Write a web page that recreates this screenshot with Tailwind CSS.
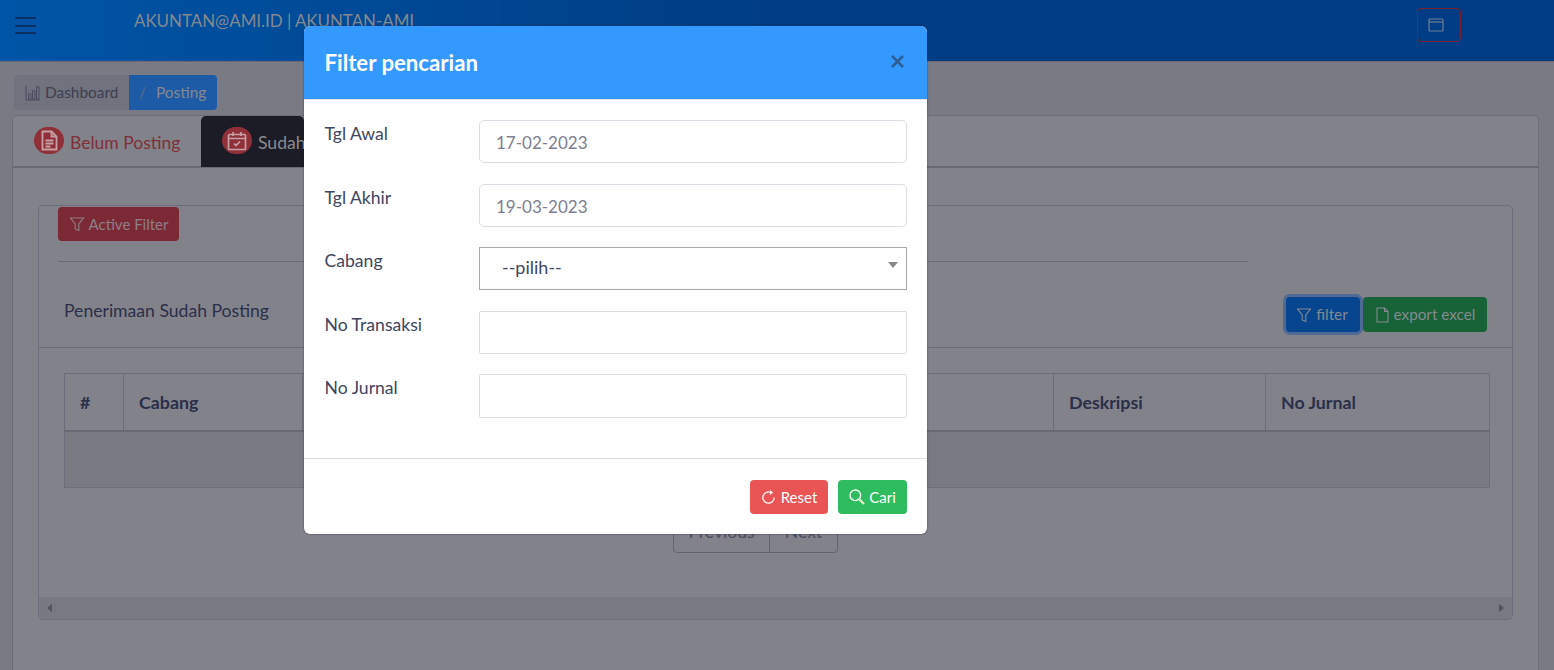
<!DOCTYPE html>
<html lang="en">
<head>
    <meta charset="UTF-8">
    <meta name="viewport" content="width=device-width, initial-scale=1.0">
    <title>Posting</title>
    <script src="https://cdn.jsdelivr.net/npm/@tailwindcss/browser@4"></script>
</head>
<body class="relative h-[670px] w-[1554px] overflow-hidden bg-[#7a7a84] font-['Lato',sans-serif] text-[17.6px] text-[#2a2f4a]">
    <!-- Navbar -->
    <nav class="flex h-[62px] items-start border-b border-[#6a6a76] bg-gradient-to-r from-[#0055a6] via-[#003d84] to-[#003d84]">
        <button class="ml-[15px] mt-[17px] flex h-[17px] w-[21px] flex-col justify-between">
            <span class="h-[2px] w-full bg-[#0b2f63]"></span>
            <span class="h-[2px] w-full bg-[#0b2f63]"></span>
            <span class="h-[2px] w-full bg-[#0b2f63]"></span>
        </button>
        <span class="ml-[98px] mt-[9px] text-[16.9px] leading-[24px] text-[#85888f]">AKUNTAN@AMI.ID | AKUNTAN-AMI</span>
        <button class="ml-auto mr-[93px] mt-[8px] flex h-[34px] w-[44px] items-center justify-center rounded-[4px] border border-[#7a2030] text-[#6d7f98]">
            <svg class="-ml-[6px]" width="16" height="16" viewBox="0 0 16 16" fill="none" stroke="currentColor" stroke-width="1.2"><rect x="1" y="2" width="14" height="12" rx="1"/><path d="M1 5h14"/></svg>
        </button>
    </nav>

    <!-- Breadcrumb -->
    <div class="ml-[14px] mt-[13px] flex h-[35px] w-[203px] overflow-hidden rounded-[4px] text-[15.4px]">
        <div class="flex w-[115px] items-center gap-[4px] bg-[#70727d] pl-[11px] text-[#3d4052]">
            <svg width="16" height="16" viewBox="0 0 16 16" fill="none" stroke="#4a4d60" stroke-width="1"><path d="M1 1v14h14"/><rect x="3.5" y="9" width="2.5" height="5"/><rect x="7.5" y="6" width="2.5" height="8"/><rect x="11.5" y="2" width="2.5" height="12"/></svg>
            <span>Dashboard</span>
        </div>
        <div class="flex flex-1 items-center bg-[#1d5ba6] pl-[10px] text-[#85888f]">
            <span class="mr-[10px] text-[#5b6c86]">/</span><span>Posting</span>
        </div>
    </div>

    <!-- Tabs card -->
    <div class="absolute left-[12px] top-[115px] h-[555px] w-[1527px] rounded-t-[5px] border border-b-0 border-[#6e6e7a] bg-[#82828a]">
        <div class="flex h-[52px] border-b-2 border-[#696974]">
            <div class="flex w-[188px] items-center pl-[21px] text-[#7f3039]">
                <span class="-mt-[2px] flex h-[27px] w-[30px] items-center justify-center rounded-full bg-[#8f3039]">
                    <svg width="17" height="21" viewBox="0 0 17 21" fill="none" stroke="#c7a0a6" stroke-width="1.8"><path d="M1.5 1.5h9l5 5v13h-14z"/><path d="M10.5 1.5v5h5M4.5 10.5h8M4.5 13.5h8M4.5 16.5h5"/></svg>
                </span>
                <span class="ml-[6px] mt-[4px] whitespace-nowrap text-[17.5px]">Belum Posting</span>
            </div>
            <div class="flex h-[51px] w-[103px] items-center overflow-hidden rounded-t-[5px] bg-[#1c1c26] pl-[21px] text-[#8a8a90]">
                <span class="-mt-[2px] flex h-[27px] w-[30px] shrink-0 items-center justify-center rounded-full bg-[#8f3039]">
                    <svg width="20" height="20" viewBox="0 0 20 20" fill="none" stroke="#c7a0a6" stroke-width="1.7"><rect x="1.5" y="3.5" width="17" height="15" rx="1"/><path d="M1.5 7.5h17M6 1v4M14 1v4M7 12.5l2 2 4-4"/></svg>
                </span>
                <span class="ml-[6px] mt-[4px] whitespace-nowrap">Sudah</span>
            </div>
        </div>

        <!-- Inner card -->
        <div class="relative ml-[25px] mt-[37px] h-[415px] w-[1475px] rounded-[5px] border border-[#6e6e7a]">
            <div class="ml-[19px] mt-px flex h-[34px] w-[121px] items-center justify-center gap-[4px] rounded-[4px] bg-[#7b2a35] text-[15px] text-[#8f7f88]">
                <svg width="16" height="16" viewBox="0 0 16 16" fill="none" stroke="currentColor" stroke-width="1.1"><path d="M1.5 2h13L9.8 8v6.5l-3.6-1.6V8z"/></svg>
                <span>Active Filter</span>
            </div>
            <div class="ml-[19px] mt-[20px] h-px w-[1190px] bg-[#6a6a76]"></div>

            <div class="flex h-[86px] items-start justify-between border-b border-[#6e6e7a] pr-[25px]">
                <span class="ml-[25px] mt-[36px] text-[#2a2f4a]">Penerimaan Sudah Posting</span>
                <div class="mt-[35px] flex gap-[3px] text-[15.3px] text-[#848a90]">
                    <div class="flex h-[35px] w-[74px] items-center justify-center gap-[4px] rounded-[4px] bg-[#07458f] ring-[3px] ring-[#4f6a94]">
                        <svg class="-ml-[2px]" width="16" height="16" viewBox="0 0 16 16" fill="none" stroke="currentColor" stroke-width="1.1"><path d="M1.5 2h13L9.8 8v6.5l-3.6-1.6V8z"/></svg>
                        <span>filter</span>
                    </div>
                    <div class="flex h-[35px] w-[124px] items-center justify-center gap-[4px] rounded-[4px] bg-[#186238]">
                        <svg width="15" height="16" viewBox="0 0 15 16" fill="none" stroke="currentColor" stroke-width="1.1"><path d="M2 1h7.5L13 4.5V15H2z"/><path d="M9.5 1v3.5H13"/></svg>
                        <span>export excel</span>
                    </div>
                </div>
            </div>

            <!-- Table -->
            <table class="ml-[25px] mt-[25px] w-[1426px] table-fixed border-collapse border border-[#6e6e7a] text-[17.8px] font-bold">
                <thead>
                    <tr class="h-[57px] border-b-2 border-[#696974] text-left">
                        <th class="w-[59px] border-r border-[#6e6e7a] pl-[15px] pt-[2px]">#</th>
                        <th class="w-[179px] border-r border-[#6e6e7a] pl-[15px] pt-[2px]">Cabang</th>
                        <th class="w-[751px] border-r border-[#6e6e7a] pl-[15px]"></th>
                        <th class="w-[212px] border-r border-[#6e6e7a] pl-[15px] pt-[2px]">Deskripsi</th>
                        <th class="pl-[15px] pt-[2px]">No Jurnal</th>
                    </tr>
                </thead>
                <tbody>
                    <tr class="h-[57px] bg-[#797982]"><td colspan="5"></td></tr>
                </tbody>
            </table>

            <!-- Pagination -->
            <div class="ml-[634px] mt-[27px] flex h-[38px] w-[165px] rounded-[4px] border border-[#63636f] text-[#4c4f60]">
                <span class="flex w-[96px] items-center justify-center border-r border-[#63636f] pb-[4px]">Previous</span>
                <span class="flex flex-1 items-center justify-center pb-[4px]">Next</span>
            </div>

            <!-- Scrollbar -->
            <div class="absolute bottom-0 left-0 flex h-[22px] w-full items-center justify-between rounded-b-[5px] bg-[#797982] px-[8px]">
                <span class="h-0 w-0 border-y-[4px] border-r-[5px] border-y-transparent border-r-[#53535e]"></span>
                <span class="h-0 w-0 border-y-[4px] border-l-[5px] border-y-transparent border-l-[#53535e]"></span>
            </div>
        </div>
    </div>

    <!-- Modal -->
    <div class="absolute left-[304px] top-[26px] flex h-[508px] w-[623px] flex-col overflow-hidden rounded-[6px] bg-white shadow-[0_0_2px_rgba(20,20,40,0.6)]">
        <div class="flex h-[74px] shrink-0 items-center justify-between border-b border-[#e2e4ec] bg-[#3399ff] pl-[20.5px] pr-[23px]">
            <h2 class="mt-px text-[22.2px] font-bold text-white">Filter pencarian</h2>
            <svg class="-mt-[2px]" width="13" height="13" viewBox="0 0 13 13" stroke="#2d5f96" stroke-width="2.6" fill="none"><path d="M1 1l11 11M12 1L1 12"/></svg>
        </div>

        <div class="flex flex-1 flex-col gap-[20.4px] pl-[20.5px] pr-[20px] pt-[20px] text-[#3e4660]">
            <div class="flex">
                <label class="mt-[3px] w-[154.5px] leading-[22px]">Tgl Awal</label>
                <input value="17-02-2023" class="h-[43.2px] flex-1 rounded-[5px] border border-[#dcdde6] pl-[16px] pt-[2px] text-[17px] text-[#7d8090] outline-none">
            </div>
            <div class="flex">
                <label class="mt-[3px] w-[154.5px] leading-[22px]">Tgl Akhir</label>
                <input value="19-03-2023" class="h-[43.2px] flex-1 rounded-[5px] border border-[#dcdde6] pl-[16px] pt-[2px] text-[17px] text-[#7d8090] outline-none">
            </div>
            <div class="flex">
                <label class="mt-[3px] w-[154.5px] leading-[22px]">Cabang</label>
                <div class="relative flex-1">
                    <select class="h-[43.2px] w-full appearance-none border border-[#a8a8a8] pb-[3px] pl-[22px] text-[18px] text-[#3e4660] outline-none"><option>--pilih--</option></select>
                    <span class="absolute right-[9px] top-[15px] h-0 w-0 border-x-[5px] border-t-[6px] border-x-transparent border-t-[#888888]"></span>
                </div>
            </div>
            <div class="flex">
                <label class="mt-[3px] w-[154.5px] leading-[22px]">No Transaksi</label>
                <input class="h-[43.2px] flex-1 rounded-[2px] border border-[#dddddd] outline-none">
            </div>
            <div class="flex">
                <label class="mt-[3px] w-[154.5px] leading-[22px]">No Jurnal</label>
                <input class="h-[43.2px] flex-1 rounded-[2px] border border-[#dddddd] outline-none">
            </div>
        </div>

        <div class="flex h-[76px] shrink-0 items-start justify-end gap-[10px] border-t border-[#dcdde6] pr-[20px] pt-[21px] text-[15px] text-white">
            <button class="flex h-[34px] w-[78px] items-center justify-center gap-[5px] rounded-[4px] bg-[#e95454]">
                <svg width="15" height="15" viewBox="0 0 16 16" fill="none" stroke="currentColor" stroke-width="1.3"><path d="M14 8A6 6 0 1 1 10.5 2.6"/><path d="M9.5 0v5.2l3.4-2.6z" fill="currentColor" stroke="none"/></svg>
                <span>Reset</span>
            </button>
            <button class="flex h-[34px] w-[69px] items-center justify-center gap-[4px] rounded-[4px] bg-[#2fbc5f]">
                <svg width="16" height="16" viewBox="0 0 16 16" fill="none" stroke="currentColor" stroke-width="1.3"><circle cx="6.3" cy="6.3" r="5.3"/><path d="M10.5 10.5l4.5 4.5" stroke="#d8f0c8" stroke-width="2.4"/></svg>
                <span>Cari</span>
            </button>
        </div>
    </div>
</body>
</html>
